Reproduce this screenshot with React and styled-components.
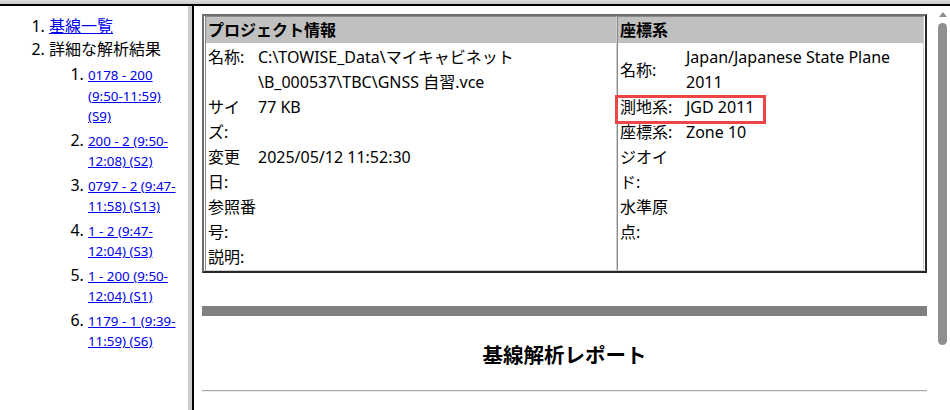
import React from 'react'
import styled, { createGlobalStyle } from 'styled-components'

const GlobalStyle = createGlobalStyle`
  html, body {
    margin: 0;
    padding: 0;
    background: #fff;
  }
  body {
    font-family: "Noto Sans", "Noto Sans CJK JP", sans-serif;
    color: #000;
    overflow: hidden;
  }
`

const baselines = [
  { name: '0178 - 200', from: '9:50', to: '11:59', session: 'S9' },
  { name: '200 - 2', from: '9:50', to: '12:08', session: 'S2' },
  { name: '0797 - 2', from: '9:47', to: '11:58', session: 'S13' },
  { name: '1 - 2', from: '9:47', to: '12:04', session: 'S3' },
  { name: '1 - 200', from: '9:50', to: '12:04', session: 'S1' },
  { name: '1179 - 1', from: '9:39', to: '11:59', session: 'S6' },
]

const project = [
  { label: '名称:', value: ['C:\\TOWISE_Data\\マイキャビネット', '\\B_000537\\TBC\\GNSS 自習.vce'] },
  { label: 'サイズ:', value: ['77 KB'] },
  { label: '変更日:', value: ['2025/05/12 11:52:30'] },
  { label: '参照番号:', value: [] },
  { label: '説明:', value: [] },
]

const coords = [
  { label: '名称:', value: ['Japan/Japanese State Plane 2011'] },
  { label: '測地系:', value: ['JGD 2011'], mark: true },
  { label: '座標系:', value: ['Zone 10'] },
  { label: 'ジオイド:', value: [] },
  { label: '水準原点:', value: [] },
]

function App() {
  return (
    <>
      <GlobalStyle />
      <Window>
        <TopBand />
        <Frames>
          <NavFrame>
            <NavList>
              <li>
                <NavLink href="#list">基線一覧</NavLink>
              </li>
              <li>
                詳細な解析結果
                <SubList>
                  {baselines.map((b) => (
                    <SubItem key={b.session}>
                      <NavLink href={'#' + b.session} $small>
                        {`${b.name} (${b.from}-`}
                        <wbr />
                        {`${b.to}) (${b.session})`}
                      </NavLink>
                    </SubItem>
                  ))}
                </SubList>
              </li>
            </NavList>
          </NavFrame>
          <FrameBorder />
          <MainFrame>
            <Content>
              <InfoTable>
                <Cell>
                  <CellHead>プロジェクト情報</CellHead>
                  {project.map((f) => (
                    <Field key={f.label} $label={49} $gap={1} $align="start">
                      <span>{f.label}</span>
                      <span>
                        {f.value.map((v, i) => (
                          <React.Fragment key={i}>
                            {i > 0 && <wbr />}
                            {v}
                          </React.Fragment>
                        ))}
                      </span>
                    </Field>
                  ))}
                </Cell>
                <Cell>
                  <CellHead>座標系</CellHead>
                  {coords.map((f) => (
                    <Field key={f.label} $label={62} $gap={4} $align="center">
                      <span>{f.label}</span>
                      <span>{f.value.join('')}</span>
                      {f.mark && <Mark />}
                    </Field>
                  ))}
                </Cell>
              </InfoTable>
              <Band />
              <Title>基線解析レポート</Title>
              <Divider />
            </Content>
            <ScrollTrack>
              <ArrowUp />
              <Thumb />
            </ScrollTrack>
          </MainFrame>
        </Frames>
      </Window>
    </>
  )
}

const Window = styled.div`
  height: 410px;
  display: flex;
  flex-direction: column;
  overflow: hidden;
`

const TopBand = styled.div`
  flex: none;
  height: 4px;
  background: linear-gradient(#dedede, #c9c9c9);
  border-bottom: 2px solid #000;
`

const Frames = styled.div`
  flex: 1;
  display: flex;
  min-height: 0;
`

const NavFrame = styled.nav`
  flex: none;
  width: 188px;
  box-sizing: border-box;
  padding: 9px 8px 8px;
  font-size: 16px;
  line-height: 23px;
  background: #fff;
`

const NavList = styled.ol`
  margin: 0;
  padding-left: 41px;
`

const SubList = styled.ol`
  margin: 0;
  padding-left: 39px;
  line-height: 19.5px;
`

const SubItem = styled.li`
  margin-top: 4px;
`

const NavLink = styled.a`
  color: #0000ee;
  text-decoration: underline;
  font-size: ${(p) => (p.$small ? '13.33px' : 'inherit')};
`

const FrameBorder = styled.div`
  flex: none;
  width: 4px;
  background: #cbcbcb;
  border-right: 2px solid #000;
`

const MainFrame = styled.div`
  flex: 1;
  display: flex;
  min-width: 0;
  overflow: hidden;
`

const Content = styled.main`
  flex: 1;
  min-width: 0;
  padding: 8px;
`

const InfoTable = styled.div`
  display: grid;
  grid-template-columns: 412px 1fr;
  padding: 0 1px;
  border: 2px solid;
  border-color: #6e6e6e #262626 #262626 #6e6e6e;
  font-size: 16px;
  line-height: 25px;
`

const Cell = styled.section`
  border: 1px solid;
  border-color: #8a8a8a #cfcfcf #cfcfcf #8a8a8a;
`

const CellHead = styled.h3`
  margin: 0 0 2px;
  padding: 0 2px;
  background: #c0c0c0;
  font-size: 16px;
  font-weight: 700;
  line-height: 26px;
`

const Field = styled.div`
  position: relative;
  display: grid;
  grid-template-columns: ${(p) => p.$label}px 1fr;
  column-gap: ${(p) => p.$gap}px;
  align-items: ${(p) => p.$align};
  padding: 0 2px;
`

const Mark = styled.div`
  position: absolute;
  left: -3px;
  top: 0;
  width: 151px;
  height: 29px;
  box-sizing: border-box;
  border: 3px solid #ee4646;
  pointer-events: none;
`

const Band = styled.div`
  height: 10px;
  margin-top: 33px;
  background: #808080;
`

const Title = styled.h1`
  margin: 24px 0 20px;
  text-align: center;
  font-size: 20.5px;
  font-weight: 700;
  line-height: 30px;
`

const Divider = styled.hr`
  margin: 0;
  border: none;
  border-top: 1px solid #a8a8a8;
  border-bottom: 1px solid #ececec;
`

const ScrollTrack = styled.div`
  flex: none;
  width: 15px;
  display: flex;
  flex-direction: column;
  align-items: center;
  background: #fff;
`

const ArrowUp = styled.div`
  margin-top: 6px;
  width: 0;
  height: 0;
  border-left: 4px solid transparent;
  border-right: 4px solid transparent;
  border-bottom: 5px solid #8c8c8c;
`

const Thumb = styled.div`
  margin-top: 6px;
  width: 9px;
  height: 322px;
  border-radius: 5px;
  background: #8f8f8f;
`

export default App
